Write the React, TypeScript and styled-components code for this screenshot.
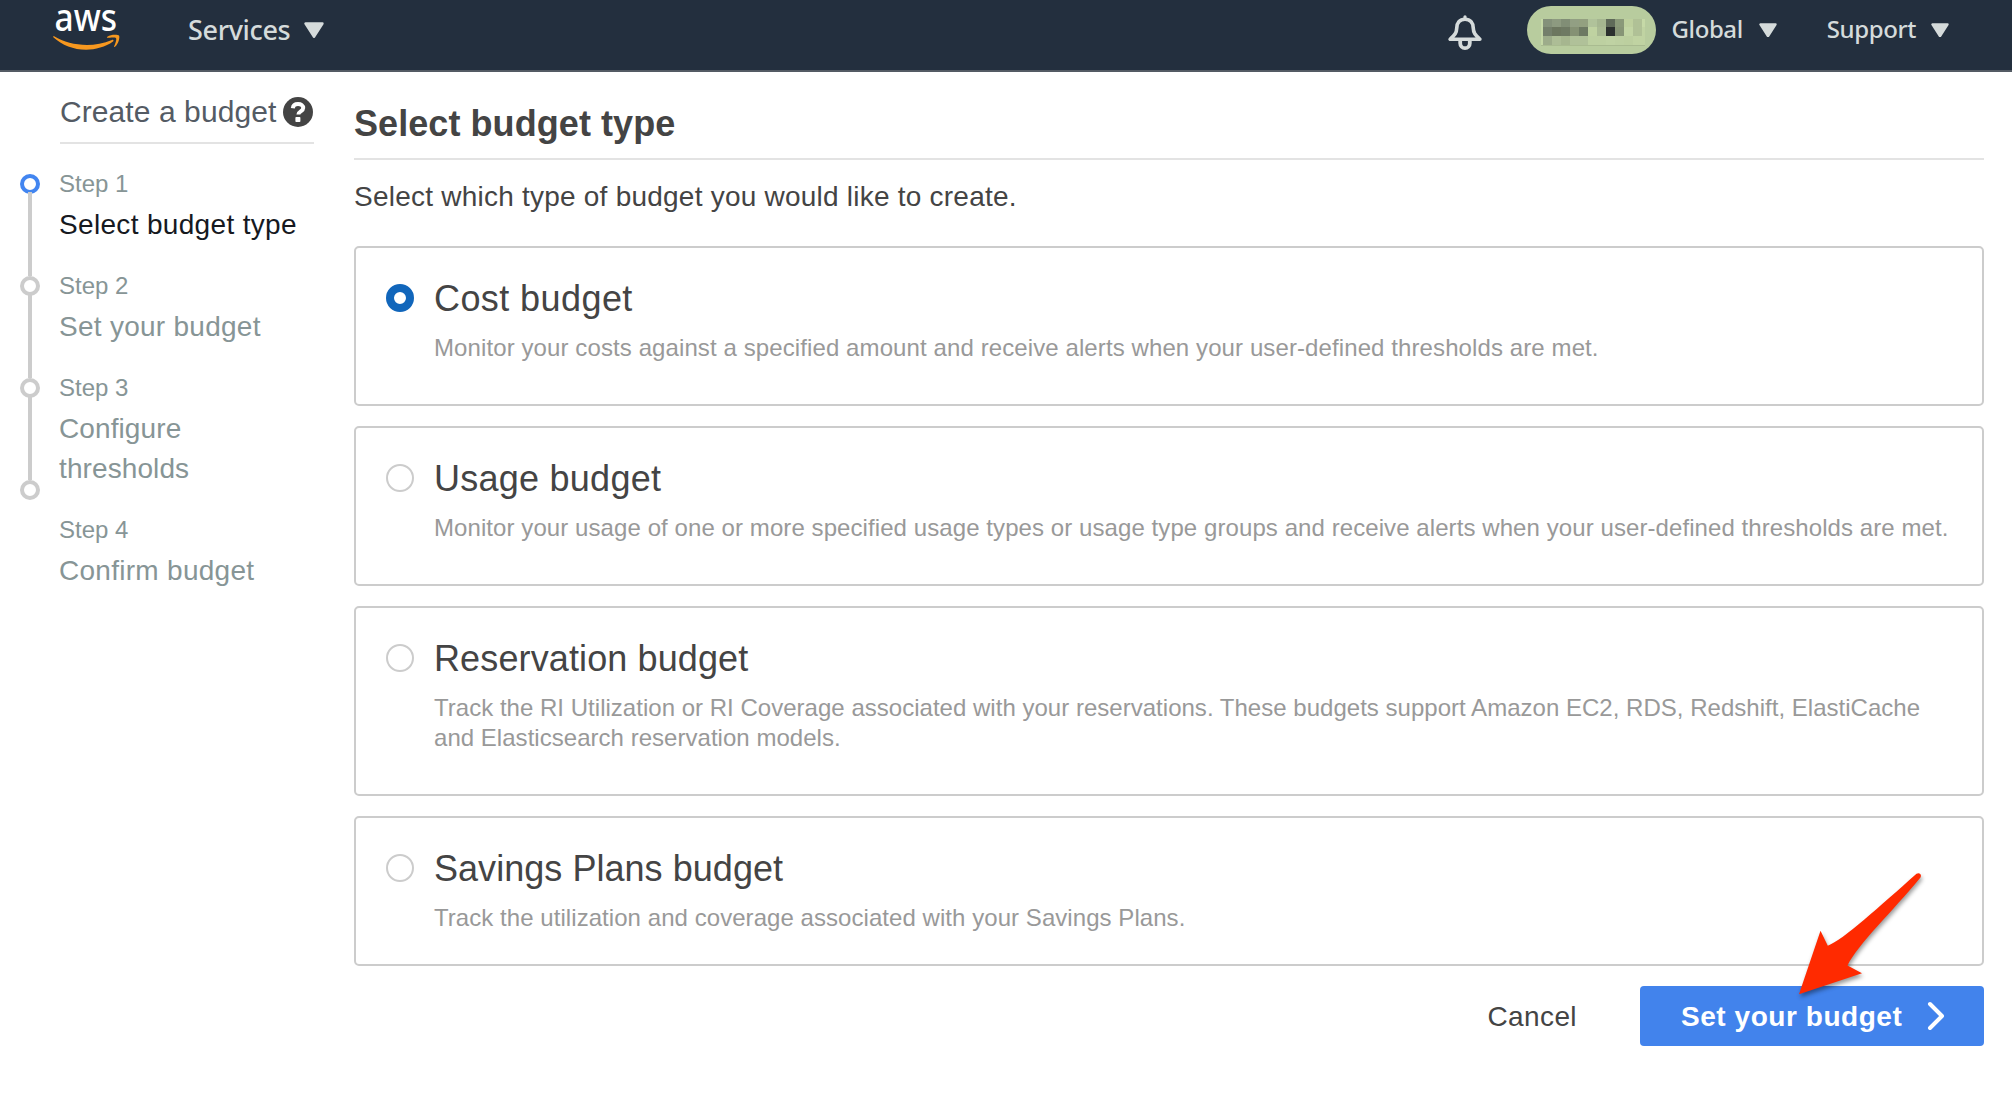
import React from "react";
import styled, { createGlobalStyle } from "styled-components";

const GlobalStyle = createGlobalStyle`
  * { box-sizing: border-box; }
  body {
    margin: 0;
    background: #fff;
    font-family: "Liberation Sans", Arial, sans-serif;
    color: #444;
  }
  h1, h2, p, ol { margin: 0; padding: 0; font-weight: normal; }
  button { font: inherit; border: 0; background: none; padding: 0; }
`;

const Page = styled.div`
  position: relative;
  width: 2012px;
  height: 1102px;
`;

/* ---------- top navigation ---------- */

const TopBar = styled.header`
  display: flex;
  align-items: flex-start;
  height: 72px;
  padding-right: 63px;
  background: #232f3e;
  border-bottom: 2px solid #545b64;
  color: #d5dbdb;
  font-family: "Noto Sans", "Open Sans", sans-serif;
  font-weight: 500;
`;

const Logo = styled.svg`
  width: 72px;
  height: 56px;
  margin-left: 50px;
  overflow: visible;
`;

const NavItem = styled.button<{ $size: number; $gap: number; $left: number; $top: number; $spacing: number }>`
  display: flex;
  align-items: center;
  gap: ${(p) => p.$gap}px;
  margin: ${(p) => p.$top}px 0 0 ${(p) => p.$left}px;
  color: inherit;
  font-size: ${(p) => p.$size}px;
  line-height: 36px;
  letter-spacing: ${(p) => p.$spacing}px;
`;

const CaretIcon = styled.svg<{ $drop: number }>`
  margin-top: ${(p) => p.$drop}px;
`;

const Spacer = styled.div`
  flex: 1;
`;

const BellIcon = styled.svg`
  width: 36px;
  height: 36px;
  margin: 15px 44px 0 0;
`;

const AccountPill = styled.div`
  width: 129px;
  height: 48px;
  margin-top: 6px;
  padding: 13px 0 0 14px;
  border-radius: 24px;
  background: #b8cc9e;
`;

const Mosaic = styled.div`
  display: grid;
  grid-template-columns: 2px repeat(11, 9px) 3px;
  grid-template-rows: 8px 9px 9px;
  width: 104px;
  height: 27px;
  border-bottom: 1px solid #a9bb90;
`;

const Cell = styled.span<{ $fill: string }>`
  background: ${(p) => p.$fill};
`;

/* ---------- wizard layout ---------- */

const Body = styled.div`
  display: flex;
`;

const Sidebar = styled.nav`
  width: 354px;
  padding: 20px 40px 0 20px;
`;

const SidebarHead = styled.div`
  display: flex;
  align-items: center;
  justify-content: space-between;
  height: 52px;
  margin-left: 40px;
  padding: 0 1px 10px 0;
  border-bottom: 2px solid #e3e3e3;
  color: #545b64;
  font-size: 30px;
  letter-spacing: 0.08px;
  white-space: nowrap;
`;

const SidebarBody = styled.div`
  display: flex;
  margin-top: 22px;
`;

const Track = styled.div`
  display: flex;
  flex-direction: column;
  align-items: center;
  width: 20px;
  padding-top: 8px;
`;

const Dot = styled.span<{ $active?: boolean }>`
  width: 20px;
  height: 20px;
  border: 4px solid ${(p) => (p.$active ? "#4285f0" : "#ccc")};
  border-radius: 50%;
`;

const Line = styled.span`
  width: 4px;
  height: 84px;
  margin-top: -2px;
  background: #ccc;
`;

const Steps = styled.ol`
  width: 246px;
  margin-left: 19px;
  list-style: none;
`;

const Step = styled.li<{ $active?: boolean }>`
  margin-bottom: 23px;
  font-size: 28px;
  line-height: 40px;
  color: ${(p) => (p.$active ? "#16191f" : "#879596")};
`;

const StepTitle = styled.div<{ $width?: number; $spacing: number }>`
  width: ${(p) => (p.$width ? p.$width + "px" : "auto")};
  letter-spacing: ${(p) => p.$spacing}px;
`;

const StepLabel = styled.div`
  margin-bottom: 3px;
  color: #879596;
  font-size: 24px;
  line-height: 36px;
`;

/* ---------- main column ---------- */

const Main = styled.main`
  width: 1630px;
`;

const Heading = styled.h1`
  height: 88px;
  padding-top: 32px;
  border-bottom: 2px solid #e3e3e3;
  font-size: 36px;
  font-weight: bold;
  line-height: 40px;
  letter-spacing: 0.07px;
`;

const Intro = styled.p`
  padding: 17px 0 29px;
  font-size: 28px;
  line-height: 40px;
  letter-spacing: 0.23px;
`;

const CardList = styled.div`
  display: grid;
  gap: 20px;
`;

const Card = styled.label<{ $bottom: number }>`
  display: flex;
  gap: 20px;
  padding: 30px 20px ${(p) => p.$bottom}px 30px;
  border: 2px solid #ccc;
  border-radius: 5px;
`;

const Radio = styled.span<{ $checked: boolean }>`
  flex: none;
  width: 28px;
  height: 28px;
  margin-top: 6px;
  border: ${(p) => (p.$checked ? "8px solid #1166bb" : "2px solid #ccc")};
  border-radius: 50%;
  background: #fff;
`;

const CardTitle = styled.h2<{ $spacing: number }>`
  padding-top: 1px;
  font-size: 36px;
  line-height: 40px;
  letter-spacing: ${(p) => p.$spacing}px;
`;

const CardText = styled.p`
  margin-top: 14px;
  color: #999;
  font-size: 24px;
  line-height: 30px;
  white-space: nowrap;
`;

const TextLine = styled.span<{ $spacing: number }>`
  display: block;
  letter-spacing: ${(p) => p.$spacing}px;
`;

const Actions = styled.div`
  display: flex;
  justify-content: flex-end;
  align-items: center;
  gap: 63px;
  height: 60px;
  margin-top: 20px;
  font-size: 28px;
`;

const CancelButton = styled.button`
  padding-top: 2px;
  color: #444;
  letter-spacing: 0.4px;
`;

const NextButton = styled.button`
  display: flex;
  align-items: center;
  justify-content: space-between;
  width: 344px;
  height: 60px;
  padding: 0 38px 0 41px;
  border-radius: 4px;
  background: #4283ec;
  color: #fff;
  font-weight: bold;
  letter-spacing: 0.55px;
`;

const NextLabel = styled.span`
  padding-top: 2px;
`;

const Pointer = styled.svg`
  position: absolute;
  left: 1790px;
  top: 864px;
  width: 144px;
  height: 140px;
  filter: drop-shadow(1px 3px 2px rgba(0, 0, 0, 0.4));
`;

const mosaicRows = [
  ["#c6d9a7", "#84917a", "#8d9a80", "#818e76", "#929f83", "#93a080", "#b0c29a", "#a5b690", "#5f6a59", "#8a9979", "#bed09e", "#b0c196", "#c6d9a7"],
  ["#c6d9a7", "#747f6b", "#6c765f", "#6e7963", "#859174", "#6d7963", "#bfd2a1", "#a9ba93", "#2b302e", "#879576", "#c2d5a4", "#b0c196", "#c0d3a2"],
  ["#c6d9a7", "#9dac8a", "#adbd96", "#a6b68f", "#b0c199", "#b0c199", "#bdd0a1", "#bdd0a1", "#bfd2a3", "#bdd0a1", "#bccf9f", "#c0d3a2", "#c0d3a2"],
];

const steps = [
  { title: "Select budget type", spacing: 0.33 },
  { title: "Set your budget", spacing: 0.27 },
  { title: "Configure thresholds", spacing: 0.1, width: 180 },
  { title: "Confirm budget", spacing: 0.28 },
];

const budgets = [
  {
    title: "Cost budget",
    spacing: 0.42,
    lines: [
      {
        text: "Monitor your costs against a specified amount and receive alerts when your user-defined thresholds are met.",
        spacing: 0.1,
      },
    ],
    bottom: 41,
  },
  {
    title: "Usage budget",
    spacing: 0.25,
    lines: [
      {
        text: "Monitor your usage of one or more specified usage types or usage type groups and receive alerts when your user-defined thresholds are met.",
        spacing: 0.08,
      },
    ],
    bottom: 41,
  },
  {
    title: "Reservation budget",
    spacing: 0.12,
    lines: [
      {
        text: "Track the RI Utilization or RI Coverage associated with your reservations. These budgets support Amazon EC2, RDS, Redshift, ElastiCache",
        spacing: 0.02,
      },
      { text: "and Elasticsearch reservation models.", spacing: 0.03 },
    ],
    bottom: 41,
  },
  {
    title: "Savings Plans budget",
    spacing: 0.04,
    lines: [
      { text: "Track the utilization and coverage associated with your Savings Plans.", spacing: 0.055 },
    ],
    bottom: 31,
  },
];

function Caret({ width, height, drop = 0 }: { width: number; height: number; drop?: number }) {
  return (
    <CaretIcon $drop={drop} width={width} height={height} viewBox="0 0 20 16">
      <path d="M1.5 1.5h17L10 14.8z" fill="#d5dbdb" stroke="#d5dbdb" strokeWidth="2.4" strokeLinejoin="round" />
    </CaretIcon>
  );
}

export default function App() {
  const [selected, setSelected] = React.useState(0);
  return (
    <Page>
      <GlobalStyle />
      <TopBar>
        <Logo viewBox="50 0 72 56">
          <text x="54.5" y="30.6" fill="#fff" fontSize="37.5" textLength="62.5" lengthAdjust="spacingAndGlyphs">
            aws
          </text>
          <g transform="translate(52.7 9.9) scale(.2205)" fill="#f7981f">
            <path d="M273.5,143.7c-32.9,24.3-80.7,37.2-121.8,37.2c-57.6,0-109.5-21.3-148.7-56.7c-3.1-2.8-0.3-6.6,3.4-4.4c42.4,24.6,94.7,39.5,148.8,39.5c36.5,0,76.6-7.6,113.5-23.2C274.2,133.6,278.9,139.7,273.5,143.7z" />
            <path d="M287.2,128.1c-4.2-5.4-27.8-2.6-38.5-1.3c-3.2,0.4-3.7-2.4-0.8-4.5c18.8-13.2,49.7-9.4,53.3-5c3.6,4.5-1,35.4-18.6,50.2c-2.7,2.3-5.3,1.1-4.1-1.9C282.5,155.7,291.4,133.4,287.2,128.1z" />
          </g>
        </Logo>
        <NavItem $size={27} $gap={14} $left={66} $top={12} $spacing={-0.35}>
          Services
          <Caret width={20} height={16} />
        </NavItem>
        <Spacer />
        <BellIcon viewBox="1447 15 36 36" fill="none" stroke="#d5dbdb">
          <path
            d="M1465 19.2c-5.6 0-8 4-8.2 8.4-.2 5.6-2 7.2-6.7 11.6h29.8c-4.700-4.400-6.500-6-6.700-11.600-.2-4.400-2.600-8.400-8.200-8.400z"
            strokeWidth="3.6"
            strokeLinejoin="round"
          />
          <path d="M1465 16.8v2" strokeWidth="3.2" strokeLinecap="round" />
          <path d="M1460.2 40v3.200a4.800 5 0 0 0 9.600 0V40" strokeWidth="3.8" />
        </BellIcon>
        <AccountPill>
          <Mosaic>
            {mosaicRows.map((row, r) => row.map((fill, c) => <Cell key={`${r}-${c}`} $fill={fill} />))}
          </Mosaic>
        </AccountPill>
        <NavItem $size={24} $gap={16} $left={16} $top={11} $spacing={-0.4}>
          Global
          <Caret width={18} height={14.4} drop={2} />
        </NavItem>
        <NavItem $size={24} $gap={15} $left={50} $top={11} $spacing={-0.4}>
          Support
          <Caret width={18} height={14.4} drop={2} />
        </NavItem>
      </TopBar>

      <Body>
        <Sidebar>
          <SidebarHead>
            Create a budget
            <svg width="30" height="30" viewBox="0 0 30 30">
              <circle cx="15" cy="15" r="15" fill="#444" />
              <path
                d="M9.8 11.2c.4-3 2.5-4.2 5.2-4.2 3 0 5.2 1.5 5.2 4.1 0 3.300-4.800 3.300-4.800 6.400"
                fill="none"
                stroke="#fff"
                strokeWidth="4"
              />
              <rect x="12.4" y="20" width="5" height="5" rx="0.8" fill="#fff" />
            </svg>
          </SidebarHead>
          <SidebarBody>
            <Track>
              <Dot $active />
              <Line />
              <Dot />
              <Line />
              <Dot />
              <Line />
              <Dot />
            </Track>
            <Steps>
              {steps.map((s, i) => (
                <Step key={s.title} $active={i === 0}>
                  <StepLabel>Step {i + 1}</StepLabel>
                  <StepTitle $width={s.width} $spacing={s.spacing}>
                    {s.title}
                  </StepTitle>
                </Step>
              ))}
            </Steps>
          </SidebarBody>
        </Sidebar>

        <Main>
          <Heading>Select budget type</Heading>
          <Intro>Select which type of budget you would like to create.</Intro>
          <CardList>
            {budgets.map((b, i) => (
              <Card key={b.title} $bottom={b.bottom} onClick={() => setSelected(i)}>
                <Radio $checked={selected === i} />
                <div>
                  <CardTitle $spacing={b.spacing}>{b.title}</CardTitle>
                  <CardText>
                    {b.lines.map((line) => (
                      <TextLine key={line.text} $spacing={line.spacing}>
                        {line.text}
                      </TextLine>
                    ))}
                  </CardText>
                </div>
              </Card>
            ))}
          </CardList>
          <Actions>
            <CancelButton>Cancel</CancelButton>
            <NextButton>
              <NextLabel>Set your budget</NextLabel>
              <svg width="20" height="32" viewBox="0 0 20 32">
                <path d="M4 4l12 12L4 28" fill="none" stroke="#fff" strokeWidth="4" strokeLinecap="round" strokeLinejoin="round" />
              </svg>
            </NextButton>
          </Actions>
        </Main>
      </Body>

      <Pointer viewBox="1790 864 144 140">
        <path
          d="M1799 994.3L1820.5 930.7L1827.8 945.7C1843 940 1880 906 1916.5 873.7C1919.5 872 1922 874.5 1920.5 877.5C1893 911 1858 944 1847.500 965.500L1862 973.300Z"
          fill="#ff2a00"
        />
      </Pointer>
    </Page>
  );
}
